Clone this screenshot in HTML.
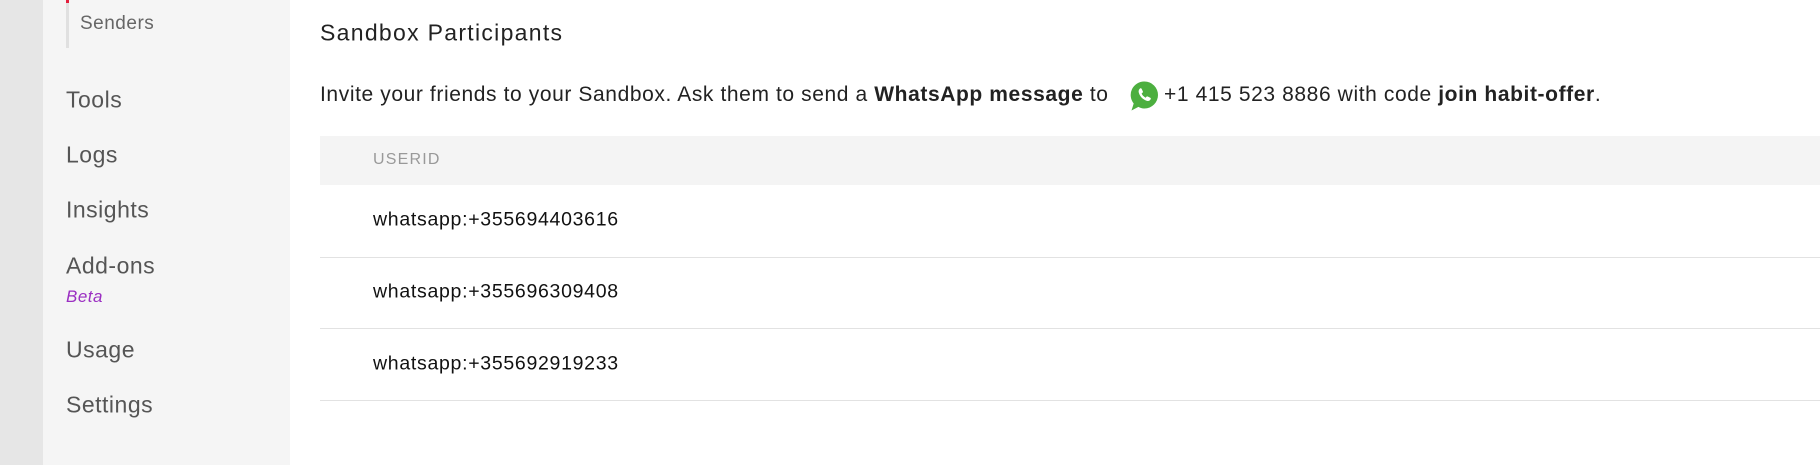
<!DOCTYPE html>
<html><head><meta charset="utf-8"><style>
*{margin:0;padding:0;box-sizing:border-box}
body{width:1820px;height:465px;overflow:hidden;background:#fff;font-family:"Liberation Sans",sans-serif;position:relative;color:#222}
.strip{position:absolute;left:0;top:0;width:43px;height:465px;background:#e6e6e6}
.side{position:absolute;left:43px;top:0;width:247px;height:465px;background:#f5f5f5}
.sub{position:absolute;left:66px;top:0;width:3px;height:48px;background:#e0e0e0}
.red{position:absolute;left:66px;top:0;width:3px;height:3px;background:#e31e3c}
.nav{position:absolute;left:66px;font-size:23px;color:#555;transform:translateY(-50%);white-space:nowrap;letter-spacing:0.5px}
.abs{position:absolute;white-space:nowrap;transform:translateY(-50%)}
.hdr{position:absolute;left:320px;top:136px;width:1500px;height:49px;background:#f4f4f4}
.line{position:absolute;left:320px;width:1500px;height:1px;background:#e2e2e2}
.row{position:absolute;left:373px;font-size:19.5px;color:#111;transform:translateY(-50%);letter-spacing:0.7px}
.inv{font-size:21px;color:#222;letter-spacing:0.6px}
</style></head><body>
<div class="strip"></div><div class="side"></div>
<div class="sub"></div><div class="red"></div>
<div class="nav" style="left:80px;top:24px;font-size:19px;color:#666">Senders</div>
<div class="nav" style="top:100px">Tools</div>
<div class="nav" style="top:155px">Logs</div>
<div class="nav" style="top:210px">Insights</div>
<div class="nav" style="top:266px">Add-ons</div>
<div class="nav" style="top:297px;font-size:17px;font-style:italic;color:#9b2fc2">Beta</div>
<div class="nav" style="top:350px">Usage</div>
<div class="nav" style="top:405px">Settings</div>

<div class="abs" style="left:320px;top:33px;font-size:23px;color:#222;letter-spacing:1.3px">Sandbox Participants</div>
<div class="abs inv" style="left:320px;top:95px">Invite your friends to your Sandbox. Ask them to send a <b>WhatsApp message</b> to</div>
<svg style="position:absolute;left:1129px;top:80px" width="31" height="32" viewBox="0 0 31 32">
<path d="M15.5 1.5a13.5 13.5 0 0 1 0 27c-2.3 0-4.3-.6-6.1-1.6L2.5 30.5l2.2-7A13.5 13.5 0 0 1 15.5 1.5z" fill="#4caf3f"/>
<path d="M11 8.5c.6-.4 1.300-.3 1.6.3l1.3 2.7c.2.5 0 1-.4 1.3l-.9.7c.8 1.8 2.3 3.3 4 4.2l.8-.9c.4-.4.9-.5 1.3-.3l2.6 1.3c.6.3.7 1 .3 1.6-.8 1.3-2.1 2-3.6 1.5-4.2-1.3-7.2-4.6-8.3-8.700-.3-1.5.3-2.8 1.3-3.7z" fill="#fff"/>
</svg>
<div class="abs inv" style="left:1164px;top:95px">+1 415 523 8886 with code <b>join habit-offer</b>.</div>

<div class="hdr"></div>
<div class="abs" style="left:373px;top:160px;font-size:16px;color:#999;letter-spacing:1.2px">USERID</div>
<div class="row" style="top:220px">whatsapp:+355694403616</div>
<div class="line" style="top:257px"></div>
<div class="row" style="top:292px">whatsapp:+355696309408</div>
<div class="line" style="top:328px"></div>
<div class="row" style="top:364px">whatsapp:+355692919233</div>
<div class="line" style="top:400px"></div>
</body></html>
